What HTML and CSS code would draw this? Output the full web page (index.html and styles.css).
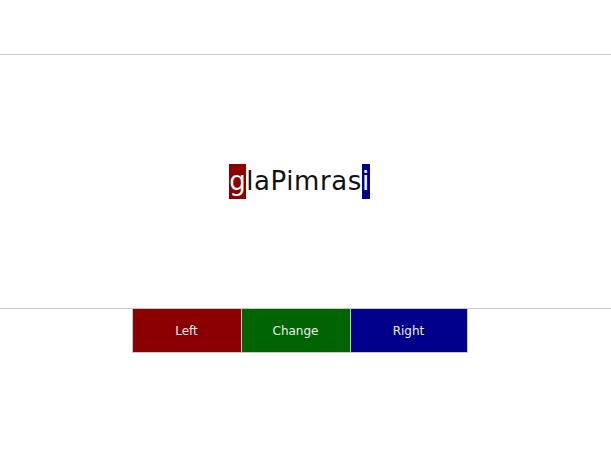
FILE: index.html
```html
<!DOCTYPE html>
<html>
<head>
<meta charset="utf-8">
<link rel="stylesheet" href="styles.css">
</head>
<body>
<div class="top"></div>
<div class="stage">
  <div class="word"><span class="hl-left">g</span>laPimras<span class="hl-right">i</span></div>
</div>
<div class="controls">
  <button class="btn btn-left">Left</button>
  <button class="btn btn-change">Change</button>
  <button class="btn btn-right">Right</button>
</div>
</body>
</html>
```
FILE: styles.css
```css
html, body {
  margin: 0;
  padding: 0;
  background: #fff;
}
body {
  font-family: "DejaVu Sans", sans-serif;
}
.top {
  height: 54px;
  border-bottom: 1px solid #c8c8c8;
}
.stage {
  height: 253px;
  border-bottom: 1px solid #c8c8c8;
  display: flex;
  align-items: center;
  justify-content: center;
  padding-right: 12px;
}
.word {
  font-size: 26px;
  line-height: 35px;
  color: #111;
  letter-spacing: 0.6px;
}
.word span {
  display: inline-block;
  color: #fff;
}
.hl-left { background: #8b0000; }
.hl-right { background: #00008b; }
.controls {
  display: flex;
  justify-content: center;
  padding-right: 12px;
}
.btn {
  height: 44px;
  border: 1px solid #c8c8c8;
  border-top: none;
  margin: 0;
  font-family: "DejaVu Sans", sans-serif;
  font-size: 12px;
  color: #eee;
  cursor: pointer;
}
.btn + .btn { border-left: none; }
.btn-left { width: 110px; background: #8b0000; }
.btn-change { width: 109px; background: #006400; }
.btn-right { width: 117px; background: #00008b; }
```
